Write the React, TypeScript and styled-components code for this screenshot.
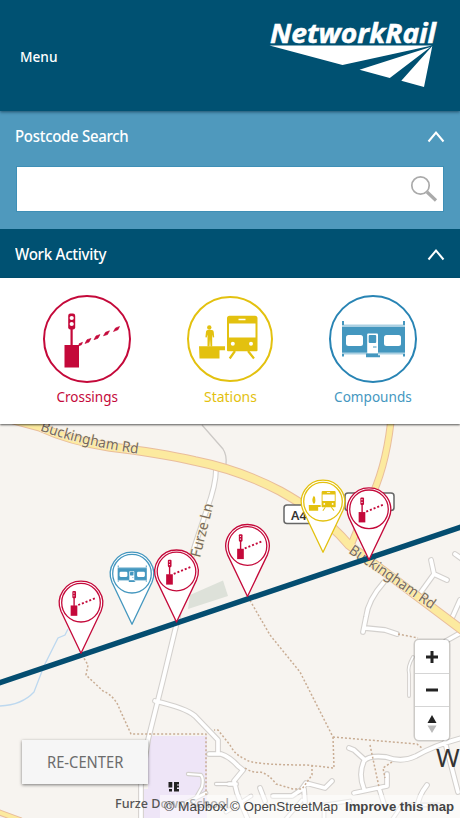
import React from "react";
import styled, { createGlobalStyle } from "styled-components";

const NAVY = "#005172";
const RED = "#c4093a";
const YELLOW = "#e3c10f";
const BLUE = "#4497bf";

const GlobalStyle = createGlobalStyle`
  * { box-sizing: border-box; }
  body { margin: 0; background: #f7f4f0; }
  svg { display: block; }
  button { font: inherit; border: 0; padding: 0; background: none; cursor: pointer; }
`;

const Page = styled.div`
  width: 460px;
  height: 818px;
  display: flex;
  flex-direction: column;
  overflow: hidden;
  font-family: "Noto Sans", "Open Sans", sans-serif;
`;

const Header = styled.header`
  height: 111px;
  flex: none;
  display: flex;
  justify-content: space-between;
  padding: 0 20px;
  background: ${NAVY};
  color: #fff;
  box-shadow: 0 1px 3px rgba(0, 30, 50, 0.6);
  z-index: 1;
`;

/* Humanist face set slightly condensed. */
const Condensed = styled.span<{ $scale: number; $origin?: string }>`
  display: inline-block;
  transform: scaleX(${(p) => p.$scale});
  transform-origin: ${(p) => p.$origin ?? "left"} center;
`;

const MenuButton = styled.button`
  height: 22px;
  margin-top: 45px;
  color: #fff;
  font-size: 15px;
  line-height: 22px;
  font-weight: 500;
`;

const LogoBox = styled.div`
  width: 172px;
  margin-top: 18px;
`;

const SearchPanel = styled.section`
  height: 118px;
  flex: none;
  background: #4f99bd;
`;

const PanelHeader = styled.div<{ $tone?: string; $height: number }>`
  height: ${(p) => p.$height}px;
  flex: none;
  display: flex;
  align-items: center;
  justify-content: space-between;
  padding: 0 15px 0 15px;
  background: ${(p) => p.$tone ?? "transparent"};
  color: #fff;
`;

const PanelTitle = styled.h2`
  margin: 0;
  font-size: 16px;
  line-height: 22px;
  font-weight: 500;
  letter-spacing: -0.3px;
`;

const SearchField = styled.label`
  height: 46px;
  margin: 6px 16px 0;
  display: flex;
  align-items: center;
  padding-right: 5px;
  background: #fff;
  border: 1px solid #3f8fb6;
`;

const SearchInput = styled.input`
  flex: 1;
  min-width: 0;
  height: 100%;
  border: 0;
  outline: 0;
  background: transparent;
  font-size: 16px;
`;

const Activities = styled.section`
  height: 146px;
  flex: none;
  display: flex;
  padding: 16px 16px 0;
  background: #fff;
  box-shadow: 0 1px 2px rgba(0, 0, 0, 0.65);
  z-index: 1;
`;

const Activity = styled.button<{ $color: string }>`
  flex: 1;
  display: flex;
  flex-direction: column;
  align-items: center;
  color: ${(p) => p.$color};
`;

const ActivityLabel = styled.span`
  margin-top: 1px;
  font-size: 15px;
  line-height: 22px;
`;

const MapArea = styled.main`
  position: relative;
  flex: 1;
  background: #f7f4f0;
`;

const RecenterButton = styled.button`
  position: absolute;
  left: 22px;
  bottom: 34px;
  width: 126px;
  height: 44px;
  background: #f6f6f6;
  color: #6c6c6c;
  font-size: 15.5px;
  box-shadow: 0 1px 3px rgba(0, 0, 0, 0.5);
`;

const Controls = styled.div`
  position: absolute;
  right: 11px;
  top: 216px;
  width: 34px;
  display: flex;
  flex-direction: column;
  background: #fff;
  border-radius: 4px;
  box-shadow: 0 0 0 1.5px rgba(0, 0, 0, 0.17);
`;

const Control = styled.button`
  height: 33px;
  display: grid;
  place-items: center;
  & + & { border-top: 1px solid #d5d5d5; }
  &:last-child { height: 34px; }
`;

const Attribution = styled.footer`
  position: absolute;
  right: 0;
  bottom: 0;
  width: 300px;
  height: 23px;
  background: rgba(255, 255, 255, 0.5);
`;

type Kind = "crossing" | "station" | "compound";

const kindColor: Record<Kind, string> = { crossing: RED, station: YELLOW, compound: BLUE };

/* Glyphs are drawn around the centre of their ring. */
const CrossingGlyph = ({ small }: { small?: boolean }) => (
  <g fill={RED}>
    <rect x="-22.5" y="6" width="14.5" height="22.5" />
    <rect x="-16.5" y="-11" width={small ? 3 : 2.2} height="18" />
    <rect x="-18.8" y="-25.5" width={small ? 8 : 7} height="16" rx="2.2" />
    <circle cx="-15.3" cy="-21" r={small ? 1.4 : 2.1} fill="#fff" />
    <circle cx="-15.3" cy="-15" r={small ? 1.4 : 2.1} fill="#fff" />
    {small ? (
      <path d="M-6 5L34 -11" stroke={RED} strokeWidth="4" strokeDasharray="4.4 4.2" />
    ) : (
      <path
        d="M-8 4.800l3.500 -1.500 -1 2.500 -2.500 1zM-2 4.500l2 -3.800 4 -1.300 -2 3.700zM7 .7l2 -3.800 4 -1.300 -2 3.700zM16.500 -3.200l2 -3.500 4 -1.500 -2 3.700zM26.500 -7.500l2 -3.500 4 -1.500 -1.500 3.200z"
        stroke={RED}
        strokeWidth=".6"
      />
    )}
  </g>
);

const StationGlyph = ({ small }: { small?: boolean }) => (
  <g fill={YELLOW}>
    <path
      fillRule="evenodd"
      d="M-.5 -23.300h25.500q2.500 0 2.500 2.500v32q0 1 -1 1h-28.500q-1 0 -1 -1v-32q0 -2.500 2.500 -2.500zM-1 -15.500v14h26.500v-14zM8.500 -20.300v1.500h7v-1.500z"
    />
    <circle cx="2.800" cy="4.800" r="2" fill="#fff" />
    <circle cx="21" cy="4.800" r="2" fill="#fff" />
    <path d="M5 12L-.3 19.500M18 12L24 19.500" stroke={YELLOW} strokeWidth="2.2" fill="none" />
    <path d="M-31 7.300h26v4h-5.500v8.200h-20z" />
    {small ? (
      <path d="M-20 5q-6.500-8 0-18q3.500 2 3.500 9.500T-20 5z" />
    ) : (
      <>
        <circle cx="-20.700" cy="-11.500" r="2.200" />
        <path d="M-23.300 -9h5.200q1.600 0 1.800 1.800l.5 5.400 -1.300 .2 -.7 -3V7.500h-1.700l-.5 -7.500 -.5 7.500h-2V-4.600l-.8 3 -1.300 -.2 .6 -5.400q.2 -1.800 1.700 -1.800z" />
      </>
    )}
  </g>
);

const CompoundGlyph = () => (
  <g fill={BLUE}>
    <rect x="-31" y="-14.500" width="63" height="30" opacity=".45" />
    <rect x="-31" y="-12" width="63" height="25.500" />
    <path d="M-31 -18h2v4h-2zM30 -18h2v4h-2zM-31 15h2v2.500h-2zM30 15h2v2.500h-2z" />
    <rect x="-27" y="-4" width="17" height="11" rx="2.500" fill="#fff" />
    <rect x="11" y="-4" width="17" height="11" rx="2.500" fill="#fff" />
    <rect x="-5.800" y="-5.500" width="10.800" height="20" rx="1" fill="#fff" />
    <rect x="-4.300" y="-4" width="7.500" height="8" rx="1" />
    <rect x="0" y="7.500" width="3.500" height="1" />
    <path d="M-7 14.500H5v1.700h2v2H-7z" />
  </g>
);

const Glyph = ({ kind, small }: { kind: Kind; small?: boolean }) =>
  kind === "crossing" ? (
    <CrossingGlyph small={small} />
  ) : kind === "station" ? (
    <StationGlyph small={small} />
  ) : (
    <CompoundGlyph />
  );

const ActivityIcon = ({ kind }: { kind: Kind }) => (
  <svg width="90" height="90" viewBox="-45 -45 90 90">
    <circle
      r={kind === "station" ? 42 : 43}
      fill="none"
      stroke={kind === "compound" ? "#2884b4" : kindColor[kind]}
      strokeWidth="2"
    />
    <Glyph kind={kind} />
  </svg>
);

const Pin = ({ kind, x, y }: { kind: Kind; x: number; y: number }) => (
  <g transform={`translate(${x} ${y})`}>
    <path
      d="M0 50.500L-20 8.600A21.700 21.700 0 1 1 20 8.600Z"
      fill="#fff"
      stroke={kindColor[kind]}
      strokeWidth="1.300"
      strokeLinejoin="round"
    />
    <circle r="19.300" fill="#fff" stroke={kindColor[kind]} strokeWidth="1.300" />
    <g transform="scale(.46)">
      <Glyph kind={kind} small />
    </g>
  </g>
);

const pins: { kind: Kind; x: number; y: number }[] = [
  { kind: "crossing", x: 81, y: 602.7 },
  { kind: "compound", x: 132, y: 573.7 },
  { kind: "crossing", x: 176.5, y: 571.5 },
  { kind: "crossing", x: 247.5, y: 546 },
  { kind: "station", x: 323, y: 501.7 },
  { kind: "crossing", x: 369, y: 509.3 },
];

const mainRoads = [
  { d: "M14 420L40 427Q70 441 110 447Q160 453 195 461Q240 470 280 491Q325 516 349 545L462 630", w: 9.5 },
  { d: "M391 420Q386 468 369 502Q357 530 351 545", w: 7.5 },
  { d: "M-2 812L20 820", w: 6 },
];

const sideRoads = [
  { d: "M216 469Q216 485 207 509L195 545Q184 580 177 622L163 680L148 740L141 785V820", w: 4 },
  { d: "M384 582Q368 600 366 617L363 632M365 628L385 630L397 634", w: 4 },
  { d: "M421 592L434 574L431 560M434 574L447 580", w: 4 },
  { d: "M452 618L460 600M455 554L462 559M446 641L462 632", w: 4 },
  { d: "M155 701Q186 708 195 716L218 740V753M209 754H221Q230 757 238 766L243 770L234 781L237 793L243 808L248 820M229 784H236", w: 4 },
  { d: "M349 748L354 750L365 760M462 738Q435 745 416 756Q402 763 386 757Q369 755 364 761Q358 774 364 789M354 793L387 786V774M379 788L384 804M445 742L458 792M427 785Q417 798 418 808", w: 4 },
  { d: "M260 788L265 801M273 796H292L301 790L306 783L325 788L332 781M304 789L305 802", w: 4 },
  { d: "M188 774L201 775Q204 779 202 787L193 803M216 784H232", w: 2.5 },
  { d: "M409 696V674Q407 667 413 657", w: 2 },
  { d: "M180 806L206 793M226 812L251 796M285 820L302 800M324 820V805L350 801M392 820L402 805H439", w: 3 },
];

const footpaths = [
  "M82 655L88 665L86 675L103 691Q115 696 120 710L131 734H206V795",
  "M248 597L270 635L300 672L333 737M333 737L334 768L307 765Q250 765 245 759Q235 755 230 745L218 730H214",
  "M333 737L417 744L422 748M398 634L418 638",
  "M245 768Q252 773 260 772Q269 774 276 784L293 789H302L312 775V766",
  "M370 745L379 787M392 762L383 768L385 778",
];

const MapCanvas = () => (
  <svg width="460" height="394" viewBox="0 424 460 394" fontFamily="'Noto Sans', sans-serif">
    <path d="M68 629L65 635L58 638L44 666L34 692Q22 705 0 706" fill="none" stroke="#bdd8ef" strokeWidth="1.300" />
    <path d="M188 609L190 595L223 580.500L228 596Z" fill="#dde1d9" />
    <path d="M148 736H207V820H144V789H148Z" fill="#eee5f7" />
    <path d="M202 425L223 449Q227 455 226 465" fill="none" stroke="#ccc9c6" strokeWidth="1.300" />
    <g fill="none" strokeLinejoin="round" strokeLinecap="round">
      {sideRoads.map((r) => (
        <path key={r.d} d={r.d} stroke="#d3d0cd" strokeWidth={r.w + 1.8} />
      ))}
      {sideRoads.map((r) => (
        <path key={r.d} d={r.d} stroke="#fff" strokeWidth={r.w - 0.3} />
      ))}
      {footpaths.map((d) => (
        <path key={d} d={d} stroke="#c9ad94" strokeWidth="1.500" strokeDasharray="2 2" strokeLinecap="butt" />
      ))}
      {mainRoads.map((r) => (
        <path key={r.d} d={r.d} stroke="#e9bd9c" strokeWidth={r.w} />
      ))}
      {mainRoads.map((r) => (
        <path key={r.d} d={r.d} stroke="#fcea9f" strokeWidth={r.w - 2} />
      ))}
    </g>
    <defs>
      <path id="north-road" d="M40 430.500Q85 447 148 455" />
      <path id="south-road" d="M348 552.500L438 614" />
      <path id="lane" d="M200 558L214.500 500" />
    </defs>
    <g fontSize="14.500" fill="#776a5c" stroke="#f8efd5" strokeWidth="1.200" paintOrder="stroke">
      <text textLength="101" lengthAdjust="spacingAndGlyphs">
        <textPath href="#north-road">Buckingham Rd</textPath>
      </text>
      <text textLength="101" lengthAdjust="spacingAndGlyphs">
        <textPath href="#south-road">Buckingham Rd</textPath>
      </text>
      <text textLength="55" lengthAdjust="spacingAndGlyphs">
        <textPath href="#lane">Furze Ln</textPath>
      </text>
    </g>
    <g fill="#fff" stroke="#666" strokeWidth="1.500">
      <rect x="284" y="505" width="48" height="18.500" rx="3" />
      <rect x="345" y="493" width="49" height="17.500" rx="3" />
    </g>
    <text x="291" y="519.500" fontSize="12.500" fontWeight="600" fill="#333">A4</text>
    <path d="M-4 684L464 526" stroke="#044d70" strokeWidth="5.500" />
    {pins.map((p) => (
      <Pin key={`${p.x}-${p.y}`} {...p} />
    ))}
    <path d="M168.500 782h3.800v5.500h-3.800zM169 789h3v2.500h-3zM174 782h5v2.500h-2v1h2v2h-2v1.500h2v2.500h-5z" fill="#222" />
    <text x="115" y="808" fontSize="12.500" fill="#555" fontWeight="500" textLength="114" lengthAdjust="spacingAndGlyphs">
      Furze Down School
    </text>
    <text x="436" y="767" fontSize="25.500" fill="#333">W</text>
  </svg>
);

const Chevron = () => (
  <svg width="18" height="14" viewBox="0 0 18 14">
    <path d="M1.500 12.500L9 3.500L16.500 12.500" fill="none" stroke="#fff" strokeWidth="2" />
  </svg>
);

const Logo = () => (
  <svg width="176" height="72" viewBox="269 18 176 72" overflow="visible">
    <text
      x="271"
      y="43.300"
      fill="#fff"
      stroke="#fff"
      strokeWidth=".5"
      fontFamily="'Open Sans', sans-serif"
      fontStyle="italic"
      fontWeight="700"
      fontSize="26.500"
      textLength="166"
      lengthAdjust="spacingAndGlyphs"
    >
      NetworkRail
    </text>
    <path
      d="M270.500 45.600H433L343.500 65ZM431.500 47L360.500 69.800L390.800 78ZM433.300 46L402.300 80.700L425 87Z"
      fill="#fff"
    />
  </svg>
);

export default function App() {
  return (
    <Page>
      <GlobalStyle />
      <Header>
        <MenuButton>
          <Condensed $scale={0.91}>Menu</Condensed>
        </MenuButton>
        <LogoBox>
          <Logo />
        </LogoBox>
      </Header>
      <SearchPanel>
        <PanelHeader $height={49}>
          <PanelTitle>
            <Condensed $scale={0.935}>Postcode Search</Condensed>
          </PanelTitle>
          <Chevron />
        </PanelHeader>
        <SearchField>
          <SearchInput aria-label="Postcode" />
          <svg width="28" height="28" viewBox="0 0 28 28" fill="none" stroke="#aaa">
            <circle cx="10.500" cy="10.500" r="8.700" strokeWidth="1.700" />
            <path d="M17 17L26 25.500" strokeWidth="3.200" />
          </svg>
        </SearchField>
      </SearchPanel>
      <PanelHeader $height={49} $tone={NAVY}>
        <PanelTitle>
          <Condensed $scale={0.945}>Work Activity</Condensed>
        </PanelTitle>
        <Chevron />
      </PanelHeader>
      <Activities>
        <Activity $color={RED}>
          <ActivityIcon kind="crossing" />
          <ActivityLabel>
            <Condensed $scale={0.9} $origin="center">Crossings</Condensed>
          </ActivityLabel>
        </Activity>
        <Activity $color={YELLOW}>
          <ActivityIcon kind="station" />
          <ActivityLabel>
            <Condensed $scale={0.93} $origin="center">Stations</Condensed>
          </ActivityLabel>
        </Activity>
        <Activity $color={BLUE}>
          <ActivityIcon kind="compound" />
          <ActivityLabel>
            <Condensed $scale={0.905} $origin="center">Compounds</Condensed>
          </ActivityLabel>
        </Activity>
      </Activities>
      <MapArea>
        <MapCanvas />
        <Controls>
          <Control aria-label="Zoom in">
            <svg width="14" height="14" viewBox="0 0 14 14">
              <path d="M7 1V13M1 7H13" stroke="#222" strokeWidth="3" />
            </svg>
          </Control>
          <Control aria-label="Zoom out">
            <svg width="14" height="14" viewBox="0 0 14 14">
              <path d="M1 7H13" stroke="#222" strokeWidth="3" />
            </svg>
          </Control>
          <Control aria-label="Reset north">
            <svg width="12" height="20" viewBox="0 0 12 20">
              <path d="M1.500 9L6 1L10.500 9Z" fill="#222" />
              <path d="M1.500 11.500L6 19L10.500 11.500Z" fill="#bbb" />
            </svg>
          </Control>
        </Controls>
        <RecenterButton>
          <Condensed $scale={0.95} $origin="center">RE-CENTER</Condensed>
        </RecenterButton>
        <Attribution>
          <svg width="300" height="23" viewBox="160 795 300 23" fontFamily="'Liberation Sans', sans-serif" fontSize="13" fill="#444">
            <text x="164" y="811" textLength="63" lengthAdjust="spacingAndGlyphs">© Mapbox</text>
            <text x="230" y="811" textLength="108" lengthAdjust="spacingAndGlyphs">© OpenStreetMap</text>
            <text x="345" y="811" textLength="109" lengthAdjust="spacingAndGlyphs" fontWeight="700">Improve this map</text>
          </svg>
        </Attribution>
      </MapArea>
    </Page>
  );
}
